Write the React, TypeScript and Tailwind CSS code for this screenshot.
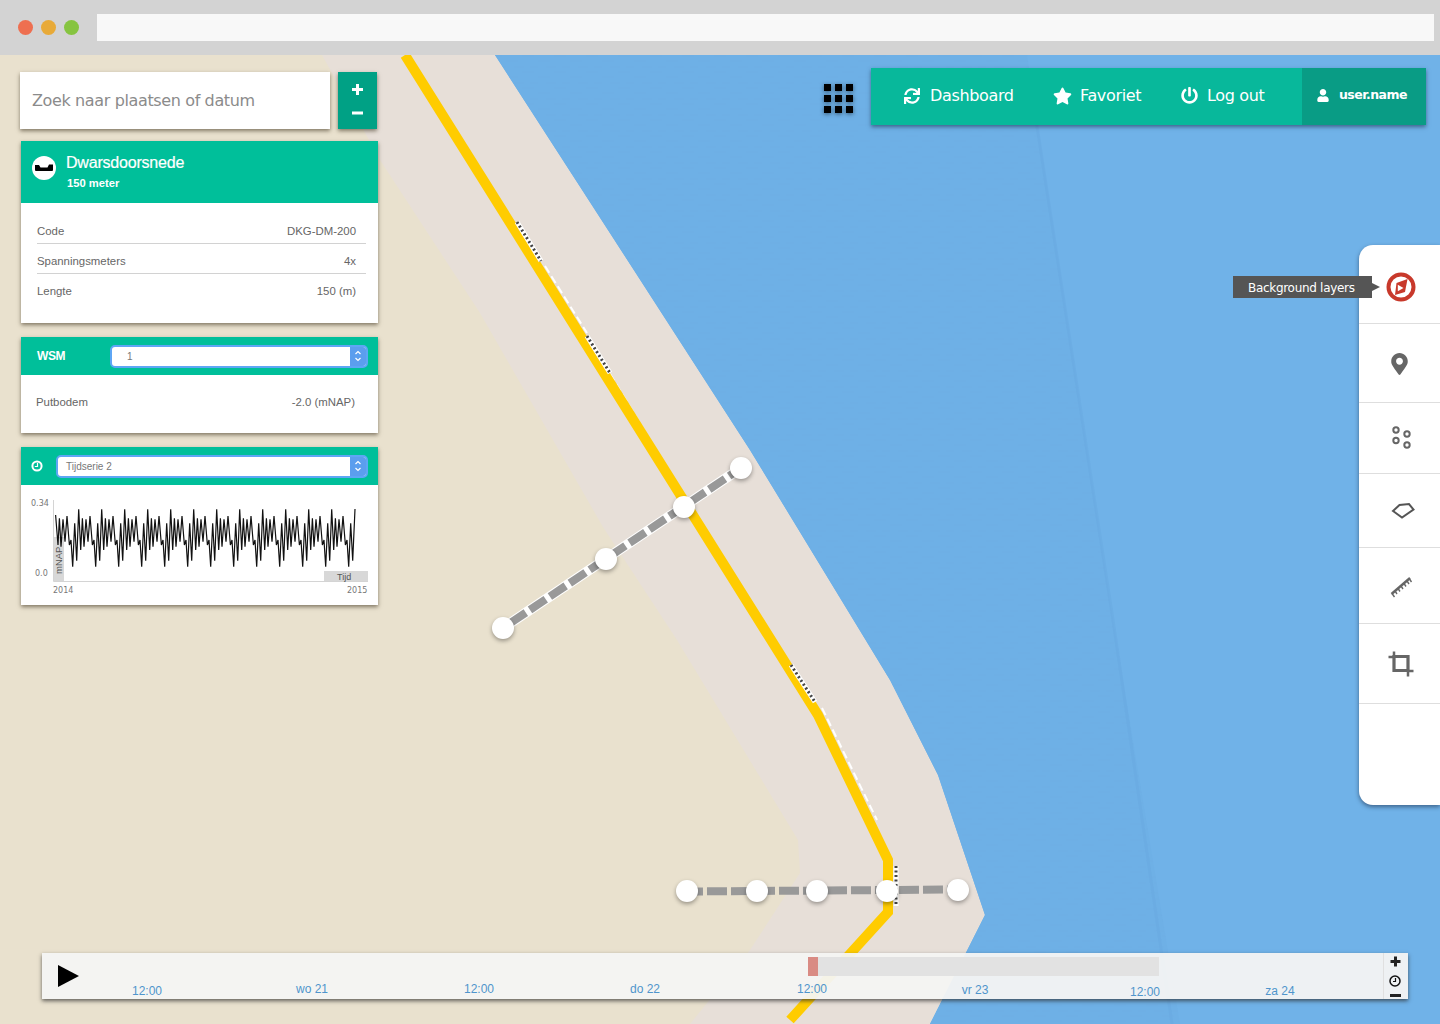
import React from "react";
import { FaSync, FaStar, FaPowerOff, FaUser, FaMapMarkerAlt } from "react-icons/fa";

const DEJAVU = "font-['DejaVu_Sans',sans-serif]";

function Select({ label, className, textClass }: { label: string; className: string; textClass: string }) {
  return (
    <div className={`flex h-[23px] items-stretch overflow-hidden rounded-[5px] border-2 border-[#5ea6f5] bg-white ${className}`}>
      <div className={`flex flex-1 items-center pt-[1px] text-[10px] text-[#777] ${textClass}`}>{label}</div>
      <div className="flex w-[16px] items-center justify-center bg-[#5b9eee]">
        <svg width="8" height="14" viewBox="0 0 8 14" fill="none" stroke="white" strokeWidth="1.2">
          <path d="M1.5 5 L4 2.5 L6.5 5" />
          <path d="M1.5 9 L4 11.5 L6.5 9" />
        </svg>
      </div>
    </div>
  );
}

function InfoRow({ k, v, last }: { k: string; v: string; last?: boolean }) {
  return (
    <div className={`flex h-[30px] items-center justify-between pt-[6px] pr-[10px] text-[11.4px] text-[#666] ${last ? "" : "border-b border-[#d2d2d2]"}`}>
      <span>{k}</span>
      <span>{v}</span>
    </div>
  );
}

function chartPath() {
  const dx = [0, 2, 4, 6, 8, 9.7, 11.3, 13.3, 15.3, 17.3, 19.7, 21.3];
  const y = [230, 100, 212, 58, 180, 85, 170, 88, 155, 78, 165, 150];
  const pts: string[] = ["55.6,515", "58,545"];
  for (let p = 0; p < 14; p++) {
    const base = 49.7 + p * 23;
    dx.forEach((d, i) => {
      const x = base + d;
      if (x > 58 && x < 353) pts.push(`${x.toFixed(1)},${(y[i] / 3 + 490).toFixed(1)}`);
    });
  }
  pts.push("355,509");
  return pts.join(" ");
}

function Chart() {
  return (
    <div className={`h-[120px] ${DEJAVU}`}>
      <svg width="357" height="120" viewBox="21 485 357 120" className="block">
        <rect x="53" y="537" width="11" height="44" fill="#d8d8d8" />
        <rect x="324" y="571" width="44" height="10" fill="#d8d8d8" />
        <path d="M53.5 500 V581.5 H368" fill="none" stroke="#d4d4d4" strokeWidth="1" />
        <polyline points={chartPath()} fill="none" stroke="#111" strokeWidth="1.2" strokeLinejoin="miter" />
        <text x="31" y="506" fontSize="8" fill="#777">0.34</text>
        <text x="35" y="576" fontSize="8" fill="#777">0.0</text>
        <text x="53" y="593" fontSize="8" fill="#777">2014</text>
        <text x="347" y="593" fontSize="8" fill="#777">2015</text>
        <text x="337" y="580" fontSize="9" fill="#555" fontFamily="Liberation Sans">Tijd</text>
        <text x="62" y="574" fontSize="9.5" fill="#555" fontFamily="Liberation Sans" transform="rotate(-90 62 574)">mNAP</text>
      </svg>
    </div>
  );
}

function LeftColumn() {
  const card = "w-[357px] ml-px bg-white shadow-[0_2px_4px_rgba(60,50,30,0.6)]";
  return (
    <aside className="mt-[17px] ml-[20px] flex w-[358px] flex-col font-['Liberation_Sans',sans-serif]">
      <div className="flex gap-[8px]">
        <div className={`flex h-[57px] w-[310px] items-center bg-white pl-[12px] text-[16px] tracking-[-0.37px] text-[#8b8b8b] shadow-[0_2px_4px_rgba(60,50,30,0.6)] ${DEJAVU}`}>
          Zoek naar plaatsen of datum
        </div>
        <div className="flex h-[57px] w-[39px] flex-col items-center justify-center gap-[15px] bg-[#00a185] pb-[4px] shadow-[0_2px_4px_rgba(60,50,30,0.6)]">
          <svg width="13" height="13" viewBox="0 0 13 13" fill="white"><path d="M5 1h3v4h4v3H8v4H5V8H1V5h4z" /></svg>
          <svg width="13" height="4" viewBox="0 0 13 4" fill="white"><rect x="1" y="0.5" width="11" height="3" /></svg>
        </div>
      </div>

      <section className={`mt-[12px] h-[182px] ${card}`}>
        <header className="flex h-[62px] items-start bg-[#00bf9a] pl-[11px] text-white">
          <div className="mt-[15px] flex h-[24px] w-[24px] items-center justify-center rounded-full bg-white">
            <svg width="18" height="8" viewBox="0 0 18 8" fill="black"><path d="M0 1 H4 L5.5 3.5 H12.5 L14 0.5 H18 V6.5 L17 7 H1 L0 6.5 Z" /></svg>
          </div>
          <div className="ml-[10px] flex flex-col">
            <span className="mt-[12px] text-[16px] leading-[19px] tracking-[-0.2px] [-webkit-text-stroke:0.2px_white]">Dwarsdoorsnede</span>
            <span className="mt-[4px] ml-px text-[11.2px] leading-[14px] font-bold">150 meter</span>
          </div>
        </header>
        <div className="pt-[11px] pr-[12px] pl-[16px]">
          <InfoRow k="Code" v="DKG-DM-200" />
          <InfoRow k="Spanningsmeters" v="4x" />
          <InfoRow k="Lengte" v="150 (m)" last />
        </div>
      </section>

      <section className={`mt-[14px] h-[96px] ${card}`}>
        <header className="flex h-[38px] items-center bg-[#00bf9a] pr-[10px] pl-[16px]">
          <span className="w-[73px] text-[12px] font-bold tracking-[-0.4px] text-white">WSM</span>
          <Select label="1" className="flex-1" textClass="pl-[15px]" />
        </header>
        <div className="flex h-[54px] items-center justify-between pt-[2px] pr-[23px] pl-[15px] text-[11.4px] text-[#666]">
          <span>Putbodem</span>
          <span>-2.0 (mNAP)</span>
        </div>
      </section>

      <section className={`mt-[14px] h-[158px] ${card}`}>
        <header className="flex h-[38px] items-center bg-[#00bf9a] pr-[10px] pl-[10px]">
          <svg width="12" height="12" viewBox="0 0 12 12" fill="none" stroke="white">
            <circle cx="6" cy="6" r="4.6" strokeWidth="2" />
            <path d="M6.5 3 V6.5 H3.8" strokeWidth="1.2" />
          </svg>
          <Select label="Tijdserie 2" className="ml-[13px] flex-1" textClass="pl-[8px]" />
        </header>
        <Chart />
      </section>
    </aside>
  );
}

function NavItem({ icon, label, className }: { icon: React.ReactNode; label: string; className: string }) {
  return (
    <div className={`flex items-center text-[16px] tracking-[-0.35px] text-white ${className}`}>
      {icon}
      <span>{label}</span>
    </div>
  );
}

function TopBar() {
  return (
    <div className={`mt-[13px] mr-[14px] flex items-center ${DEJAVU}`}>
      <div className="mt-[3px] mr-[18px] grid grid-cols-[repeat(3,7px)] gap-[4px] drop-shadow-[0_1px_2px_rgba(0,0,0,0.5)]">
        {Array.from({ length: 9 }).map((_, i) => (
          <div key={i} className="h-[7px] w-[7px] bg-black" />
        ))}
      </div>
      <nav className="flex h-[57px] w-[555px] items-stretch bg-[#08b89b] shadow-[0_2px_4px_rgba(30,50,80,0.6)]">
        <div className="flex flex-1 items-center pb-[2px] pl-[33px]">
          <NavItem icon={<FaSync className="mr-[10px] h-[16px] w-[16px]" />} label="Dashboard" className="w-[149px]" />
          <NavItem icon={<FaStar className="mr-[8px] h-[18px] w-[19px]" />} label="Favoriet" className="w-[128px]" />
          <NavItem icon={<FaPowerOff className="mr-[9px] h-[17px] w-[17px]" />} label="Log out" className="" />
        </div>
        <div className="flex w-[124px] items-center bg-[#099c85] pb-[2px] pl-[15px] text-[12.5px] font-bold tracking-[-0.55px] text-white">
          <FaUser className="mr-[10px] h-[13px] w-[12px]" />
          <span>user.name</span>
        </div>
      </nav>
    </div>
  );
}

function SideRow({ h, children, last }: { h: string; children?: React.ReactNode; last?: boolean }) {
  return <div className={`flex items-center justify-center ${h} ${last ? "" : "border-b border-[#dedede]"}`}>{children}</div>;
}

function Sidebar() {
  return (
    <div className="relative mt-[120px] w-[81px] rounded-l-[14px] bg-white shadow-[0_2px_4px_rgba(30,50,80,0.6)]">
      <div className={`absolute top-[31px] right-[68px] flex h-[22px] w-[139px] items-center bg-[#555] pt-[1px] pl-[15px] text-[12px] tracking-[-0.3px] text-white ${DEJAVU}`}>
        Background layers
        <div className="absolute top-[7px] left-full h-0 w-0 border-y-[4px] border-l-[8px] border-y-transparent border-l-[#555]" />
      </div>
      <SideRow h="h-[79px]">
        <svg width="30" height="30" viewBox="0 0 30 30" className="mt-[5px] ml-[3px]">
          <circle cx="15" cy="15" r="12.5" fill="none" stroke="#c8392b" strokeWidth="4" />
          <path d="M21.5 7 L19 20 L9 23 L10.5 11 Z" fill="#c8392b" />
          <path d="M11.8 12.8 L17.5 16 L11.8 19.2 Z" fill="white" />
        </svg>
      </SideRow>
      <SideRow h="h-[79px]">
        <FaMapMarkerAlt className="mt-[2px] h-[22px] w-[17px] text-[#666]" />
      </SideRow>
      <SideRow h="h-[71px]">
        <svg width="24" height="26" viewBox="0 0 24 26" fill="none" stroke="#666" strokeWidth="2" className="ml-[4px]">
          <circle cx="6" cy="5" r="2.7" />
          <circle cx="17" cy="9" r="2.7" />
          <circle cx="6" cy="15.5" r="2.7" />
          <circle cx="17" cy="20" r="2.7" />
        </svg>
      </SideRow>
      <SideRow h="h-[74px]">
        <svg width="24" height="18" viewBox="0 0 24 18" fill="none" stroke="#555" strokeWidth="2" className="ml-[6px]">
          <path d="M2 9 L8.5 3 L18 2 L22.5 7.5 L11 15.5 Z" />
        </svg>
      </SideRow>
      <SideRow h="h-[76px]">
        <svg width="24" height="24" viewBox="0 0 24 24" fill="none" stroke="#666" className="ml-[3px]">
          <path d="M2.5 20 L21 4" strokeWidth="2.4" />
          <path d="M3 19.5 L5.5 23 M6 17 L8 20 M9 14.5 L11 17.5 M12 12 L14 15 M15 9.5 L17 12.5 M18 7 L20 10 M20.5 5 L22.5 8" strokeWidth="1.4" />
        </svg>
      </SideRow>
      <SideRow h="h-[80px]">
        <svg width="26" height="26" viewBox="0 0 26 26" fill="none" stroke="#666" className="ml-[3px]">
          <path d="M6 0.5 V6 M0.5 6 H6 M20 20 V25.5 M20 20 H25.5" strokeWidth="2.5" />
          <path d="M6 5.5 H20 V19.5 H6 Z" strokeWidth="3.2" />
        </svg>
      </SideRow>
      <SideRow h="h-[101px]" last />
    </div>
  );
}

const TICKS = [
  { t: "12:00", x: 105, y: 31 },
  { t: "wo 21", x: 270, y: 29 },
  { t: "12:00", x: 437, y: 29 },
  { t: "do 22", x: 603, y: 29 },
  { t: "12:00", x: 770, y: 29 },
  { t: "vr 23", x: 933, y: 30 },
  { t: "12:00", x: 1103, y: 32 },
  { t: "za 24", x: 1238, y: 31 },
];

function Timeline() {
  return (
    <div className="relative mx-[42px] mb-[25px] flex h-[46px] w-[1366px] bg-[#f4f4f3]/95 shadow-[0_2px_4px_rgba(40,40,40,0.7)] font-['Liberation_Sans',sans-serif]">
      <div className="mt-[12px] ml-[16px] h-0 w-0 border-y-[11.5px] border-l-[21px] border-y-transparent border-l-black" />
      <div className="absolute top-[4px] left-[766px] flex h-[19px] w-[351px]">
        <div className="w-[10px] bg-[#d98b84]" />
        <div className="flex-1 bg-[#e2e2e2]" />
      </div>
      {TICKS.map((k, i) => (
        <span
          key={i}
          className="absolute -translate-x-1/2 -translate-y-1/2 text-[12px] leading-none text-[#4f95cc]"
          style={{ left: k.x, top: k.y + 7 }}
        >
          {k.t}
        </span>
      ))}
      <div className="absolute top-0 right-0 bottom-0 flex w-[25px] flex-col items-center justify-between border-l border-[#e0e0e0] pt-[3px] pr-[2px] pb-[2px]">
        <svg width="11" height="11" viewBox="0 0 11 11" fill="#222"><path d="M4 0.5h3v3.5h3.5v3H7v3.5H4V7H0.5V4H4z" /></svg>
        <svg width="12" height="12" viewBox="0 0 12 12" fill="none" stroke="#111">
          <circle cx="6" cy="6" r="5" strokeWidth="1.5" />
          <path d="M6.5 3 V6.5 H4" strokeWidth="1.2" />
        </svg>
        <svg width="11" height="3" viewBox="0 0 11 3" fill="#222"><rect width="11" height="3" /></svg>
      </div>
    </div>
  );
}

function RoadLabel({ d }: { d: string }) {
  return (
    <g fill="none">
      <path d={d} stroke="#fff" strokeWidth="5" />
      <path d={d} stroke="#444" strokeWidth="3" strokeDasharray="2 2.5" />
    </g>
  );
}

function MapLayer() {
  const node = "drop-shadow-[0_2px_2px_rgba(0,0,0,0.35)]";
  const nodes1 = [[503, 628], [606, 559], [684, 507], [741, 468]];
  const nodes2 = [[687, 891], [757, 891], [817, 891], [887, 891], [958, 890]];
  return (
    <svg className="absolute inset-0 h-full w-full" viewBox="0 55 1440 969" preserveAspectRatio="none">
      <defs>
        <pattern id="waves" width="32" height="16" patternUnits="userSpaceOnUse">
          <path d="M2 3 H12 M18 3 H26 M10 8 H22 M0 13 H6 M26 13 H32" stroke="#66a6dc" strokeWidth="0.8" opacity="0.3" />
        </pattern>
      </defs>
      <rect x="0" y="55" width="1440" height="969" fill="#e9e1ce" />
      <polygon
        points="322,55 1440,55 1440,1024 690,1024 750,950 800,873 798,840 677,640 603,527 480,313 380,160"
        fill="#e7dfd8"
      />
      <polygon points="495,55 1440,55 1440,1024 930,1024 985,915 938,775 890,680 750,450" fill="#70b2e8" />
      <polygon points="495,55 1027,55 1113,620 1180,1024 930,1024 985,915 938,775 890,680 750,450" fill="#6eb0e6" />
      <polygon points="495,55 1027,55 1113,620 1180,1024 930,1024 985,915 938,775 890,680 750,450" fill="url(#waves)" />
      <path d="M1033 100 L1113 620 L1172 1024" stroke="#68a9df" strokeWidth="3" fill="none" opacity="0.45" />

      <g fill="none" stroke="#fff" strokeWidth="2" strokeDasharray="8 4">
        <path d="M545 266 L587 333" />
        <path d="M610 374 L650 440" />
        <path d="M696 518 L735 576" />
        <path d="M822 708 L877 820" />
      </g>
      <path d="M405 55 L818 715 L888 860 L888 912 L790 1020" fill="none" stroke="#ffcc00" strokeWidth="10" strokeLinejoin="miter" />
      <RoadLabel d="M517 222 L541 261" />
      <RoadLabel d="M587 336 L610 373" />
      <RoadLabel d="M791 665 L815 702" />
      <RoadLabel d="M896 866 L896 906" />

      <path d="M503 628 L741 468" stroke="#fff" strokeWidth="10" fill="none" />
      <path d="M503 628 L741 468" stroke="#999" strokeWidth="8" strokeDasharray="19 5" strokeDashoffset="15.5" fill="none" />
      <path d="M687 891.5 L958 889.5" stroke="#999" strokeWidth="8" strokeDasharray="20 4" strokeDashoffset="4" fill="none" />

      {[...nodes1, ...nodes2].map(([x, y], i) => (
        <circle key={i} cx={x} cy={y} r="11" fill="#fff" className={node} />
      ))}
    </svg>
  );
}

export default function App() {
  return (
    <div className="flex h-[1024px] w-[1440px] flex-col overflow-hidden">
      <header className="flex h-[55px] items-center bg-[#d3d3d3] pr-[6px] pl-[18px]">
        <div className="flex gap-[8px]">
          <div className="h-[15px] w-[15px] rounded-full bg-[#ee6f50]" />
          <div className="h-[15px] w-[15px] rounded-full bg-[#e8aa38]" />
          <div className="h-[15px] w-[15px] rounded-full bg-[#86c440]" />
        </div>
        <div className="ml-[18px] h-[27px] flex-1 bg-[#f8f8f8]" />
      </header>
      <main className="relative h-[969px] overflow-hidden">
        <MapLayer />
        <div className="relative flex h-full flex-col">
          <div className="flex flex-1">
            <LeftColumn />
            <div className="flex flex-1 flex-col items-end">
              <TopBar />
              <Sidebar />
            </div>
          </div>
          <Timeline />
        </div>
      </main>
    </div>
  );
}
